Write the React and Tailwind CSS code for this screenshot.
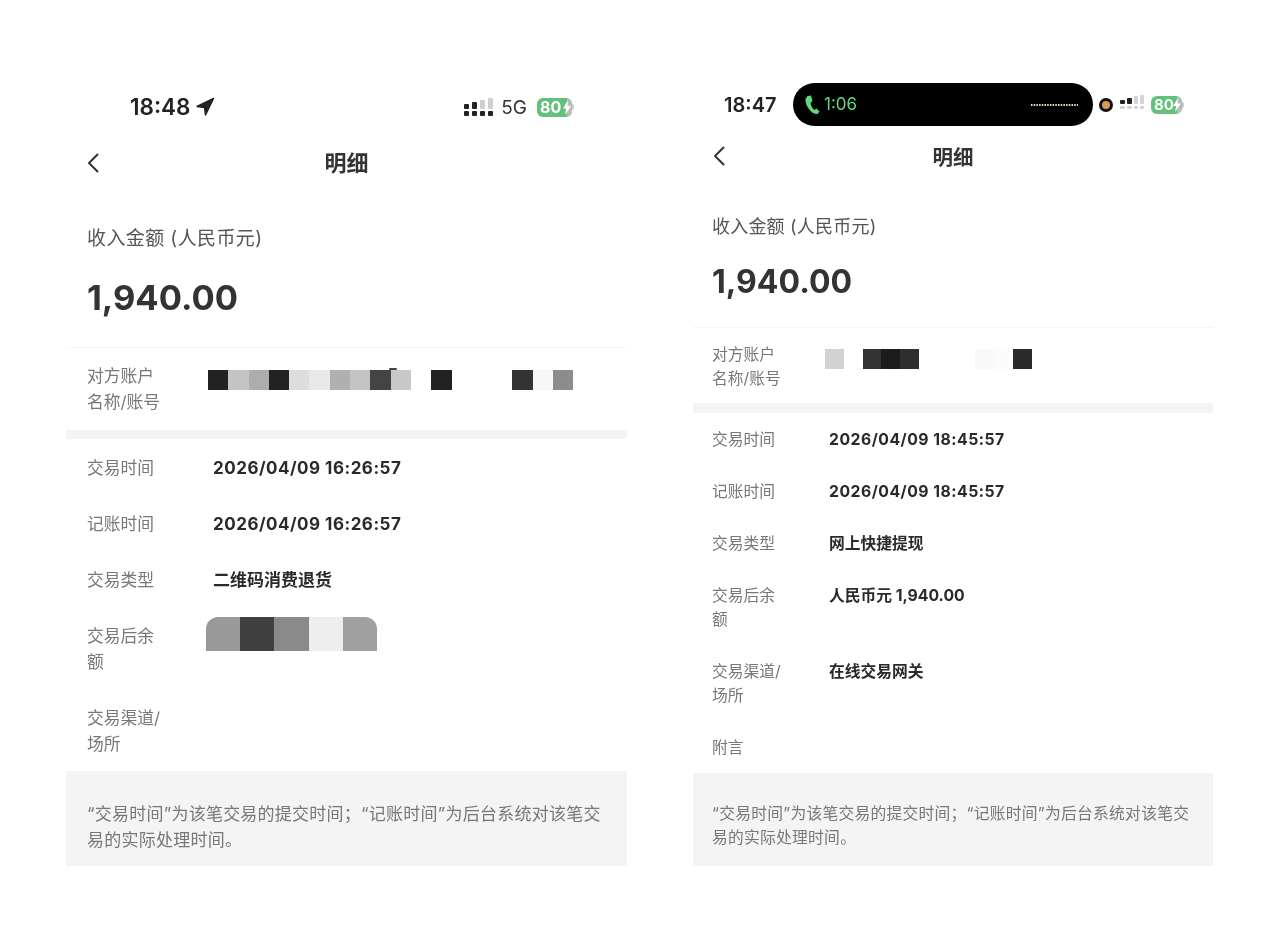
import React from "react";

const FONT = "font-['Inter','Noto_Sans_CJK_SC',sans-serif]";

function Mosaic({ colors, cell, className = "" }) {
  return (
    <div className={`flex ${className}`}>
      {colors.map((c, i) => (
        <div key={i} style={{ backgroundColor: c, width: cell }} className="h-full" />
      ))}
    </div>
  );
}

function Signal({ rows, width = 30 }) {
  return (
    <svg width={width} height="20" viewBox={`0 0 ${width} 20`}>
      {rows.map(([x, y, w, h, fill], i) => (
        <rect key={i} x={x} y={y} width={w} height={h} rx="1" fill={fill} />
      ))}
    </svg>
  );
}

function Battery({ small }) {
  return (
    <div className="flex items-center">
      <div className={`relative flex items-center rounded-[6px] bg-[#62c27c] text-white font-bold overflow-hidden ${small ? "w-[31px] h-[18px] text-[15px]" : "w-[35px] h-[19px] text-[16px]"}`}>
        <span className="pl-[3px] leading-none">80</span>
        <svg className="absolute right-0 top-0 h-full" width="10" viewBox="0 0 10 19">
          <rect x="5" width="5" height="19" fill="#bcbcbc" />
          <path d="M6 2 L1 10.5 H4 L3 17 L9 8 H5.5 Z" fill="#fff" />
        </svg>
      </div>
      <div className="w-[2px] h-[6px] rounded-r-full bg-[#c8c8c8]" />
    </div>
  );
}

function Chevron({ className }) {
  return (
    <svg className={className} width="12" height="20" viewBox="0 0 12 20" fill="none">
      <path d="M10.5 1.5 L2 10 L10.5 18.5" stroke="#333" strokeWidth="2" strokeLinecap="round" strokeLinejoin="round" />
    </svg>
  );
}

function LRow({ label, value, num }) {
  return (
    <div className="flex mb-[30px]">
      <div className="w-[126px] shrink-0 text-[16.75px] leading-[26px] text-[#777]">{label}</div>
      <div className={`text-[17px] leading-[26px] font-bold text-[#2a2a2a] ${num ? "tracking-[0.5px]" : ""}`}>{value}</div>
    </div>
  );
}

function RRow({ label, value, num }) {
  return (
    <div className="flex mb-[28px]">
      <div className="w-[117px] shrink-0 pr-[40px] text-[15.75px] leading-[24px] text-[#777]">{label}</div>
      <div className={`text-[15.75px] leading-[24px] font-bold text-[#2a2a2a] ${num ? "tracking-[0.5px]" : ""}`}>{value}</div>
    </div>
  );
}

function LeftPanel() {
  return (
    <div className="w-[561px] shrink-0 pt-[93px]">
      <div className="h-[28px] flex items-center pl-[64px] pr-[53px]">
        <span className="text-[22.5px] font-semibold leading-none text-[#222]">18:48</span>
        <svg className="ml-[5px]" width="20" height="20" viewBox="0 0 20 20">
          <path d="M18.5 1.5 L2 9.5 L9.5 10.5 L10.5 18 Z" fill="#222" stroke="#222" strokeWidth="1.5" strokeLinejoin="round" />
        </svg>
        <div className="ml-auto flex items-center">
          <Signal rows={[
            [0, 7, 5, 5, "#222"], [8, 5, 5, 7, "#222"], [16, 3, 5, 9, "#cfcfcf"], [24, 1, 5, 11, "#cfcfcf"],
            [0, 14, 5, 5, "#222"], [8, 14, 5, 5, "#222"], [16, 14, 5, 5, "#222"], [24, 14, 5, 5, "#222"],
          ]} />
          <span className="ml-[7px] text-[19px] leading-none text-[#333]">5G</span>
          <div className="ml-[10px]"><Battery /></div>
        </div>
      </div>
      <div className="mt-[22px] h-[40px] flex items-center relative">
        <Chevron className="ml-[21px]" />
        <div className="absolute inset-0 flex items-center justify-center text-[22px] font-bold text-[#333]">明细</div>
      </div>
      <div className="mt-[42px] pl-[21px] h-[28px] text-[19px] leading-[28px] tracking-[0.4px] text-[#555]">收入金额 (人民币元)</div>
      <div className="mt-[23px] pl-[21px] h-[44px] text-[34.5px] leading-[44px] font-bold text-[#333]">1,940.00</div>
      <div className="mt-[27px] h-[1px] bg-[#f6f6f6]" />
      <div className="h-[82px] pt-[15px] pl-[21px] flex">
        <div className="w-[121px] shrink-0 text-[16.75px] leading-[26px] text-[#777]">对方账户<br />名称/账号</div>
        <div className="relative mt-[7px] h-[20px]">
          <Mosaic className="h-full" cell="20.3px" colors={["#222","#c4c4c4","#adadad","#222","#ddd","#e9e9e9","#b0b0b0","#c4c4c4","#444","#c8c8c8","#fff","#222","#fff","#fff","#fff","#333","#f7f7f7","#8c8c8c"]} />
          <div className="absolute left-[181px] -top-[2px] w-[8px] h-[2px] rounded-full bg-[#444]" />
        </div>
      </div>
      <div className="h-[9px] bg-[#f4f4f4]" />
      <div className="pt-[16px] pl-[21px] h-[332px]">
        <LRow num label="交易时间" value="2026/04/09 16:26:57" />
        <LRow num label="记账时间" value="2026/04/09 16:26:57" />
        <LRow label="交易类型" value="二维码消费退货" />
        <div className="flex mb-[30px]">
          <div className="w-[119px] shrink-0 pr-[40px] text-[16.75px] leading-[26px] text-[#777]">交易后余额</div>
          <Mosaic className="-mt-[6px] h-[34px] rounded-t-[12px] overflow-hidden" cell="34.2px" colors={["#999","#404040","#8a8a8a","#eee","#a0a0a0"]} />
        </div>
        <div className="w-[85px] text-[16.75px] leading-[26px] text-[#777]">交易渠道/场所</div>
      </div>
      <div className="h-[95px] bg-[#f4f4f4] px-[21px] pt-[30px] text-[17px] tracking-[0.24px] leading-[26px] text-[#777]">
        “交易时间”为该笔交易的提交时间；“记账时间”为后台系统对该笔交易的实际处理时间。
      </div>
    </div>
  );
}

function RightPanel() {
  return (
    <div className="w-[520px] shrink-0 pt-[83px]">
      <div className="h-[43px] flex items-center">
        <span className="ml-[31px] w-[69px] text-[20px] font-semibold leading-none text-[#222]">18:47</span>
        <div className="w-[300px] h-[43px] rounded-[22px] bg-black flex items-center pl-[12px] pr-[15px]">
          <svg width="15" height="20" viewBox="0 0 15 20">
            <path d="M2.5 1 L6 .5 L7.5 6 L5.5 8 C6 11 7.5 13.5 9.5 15 L11.5 13.5 L14.5 16.5 L12.5 19 C6.5 19.5 0 11 .5 4 Z" fill="#5fd97a" />
          </svg>
          <span className="ml-[4px] text-[17px] leading-none text-[#63d77e]">1:06</span>
          <svg className="ml-auto" width="47" height="2" viewBox="0 0 47 2">
            <line x1="0" y1="1" x2="47" y2="1" stroke="#e4e4c8" strokeWidth="2" strokeDasharray="1.5 1.2" />
          </svg>
        </div>
        <div className="ml-[6px] w-[14px] h-[14px] rounded-full bg-[#d99a55] border-[3px] border-[#111]" />
        <div className="ml-[7px]">
          <Signal width={25} rows={[
            [0, 5, 5, 4, "#222"], [7, 3, 5, 6, "#222"], [14, 1, 4, 8, "#d4d4d4"], [20, 0, 4, 9, "#d4d4d4"],
            [0, 11, 5, 3, "#d4d4d4"], [7, 11, 5, 3, "#d4d4d4"], [14, 11, 4, 3, "#d4d4d4"], [20, 11, 4, 3, "#d4d4d4"],
          ]} />
        </div>
        <div className="ml-[6px]"><Battery small /></div>
      </div>
      <div className="mt-[14px] h-[36px] flex items-center relative">
        <Chevron className="ml-[20px] -mt-[4px]" />
        <div className="absolute inset-0 flex items-center justify-center text-[20.5px] font-bold text-[#333]">明细</div>
      </div>
      <div className="mt-[38px] pl-[19px] h-[26px] text-[18px] leading-[26px] tracking-[0.2px] text-[#555]">收入金额 (人民币元)</div>
      <div className="mt-[21px] pl-[19px] h-[42px] text-[32px] leading-[42px] font-bold text-[#333]">1,940.00</div>
      <div className="mt-[24px] h-[1px] bg-[#f6f6f6]" />
      <div className="h-[75px] pt-[15px] pl-[19px] flex">
        <div className="w-[113px] shrink-0 text-[15.75px] leading-[24px] text-[#777]">对方账户<br />名称/账号</div>
        <Mosaic className="mt-[6px] h-[20px]" cell="18.8px" colors={["#d2d2d2","#fff","#333","#1c1c1c","#2e2e2e","#fff","#fff","#fff","#f9f9f9","#fbfbfb","#2a2a2a"]} />
      </div>
      <div className="h-[10px] bg-[#f4f4f4]" />
      <div className="pt-[15px] pl-[19px] h-[360px]">
        <RRow num label="交易时间" value="2026/04/09 18:45:57" />
        <RRow num label="记账时间" value="2026/04/09 18:45:57" />
        <RRow label="交易类型" value="网上快捷提现" />
        <RRow label="交易后余额" value="人民币元 1,940.00" />
        <RRow label="交易渠道/场所" value="在线交易网关" />
        <div className="text-[15.75px] leading-[24px] text-[#777]">附言</div>
      </div>
      <div className="h-[93px] bg-[#f4f4f4] px-[19px] pt-[29px] text-[15.8px] tracking-[0.22px] leading-[24px] text-[#777]">
        “交易时间”为该笔交易的提交时间；“记账时间”为后台系统对该笔交易的实际处理时间。
      </div>
    </div>
  );
}

export default function App() {
  return (
    <div className={`w-[1280px] h-[932px] bg-white overflow-hidden flex pl-[66px] gap-[66px] blur-[0.35px] ${FONT}`}>
      <LeftPanel />
      <RightPanel />
    </div>
  );
}
